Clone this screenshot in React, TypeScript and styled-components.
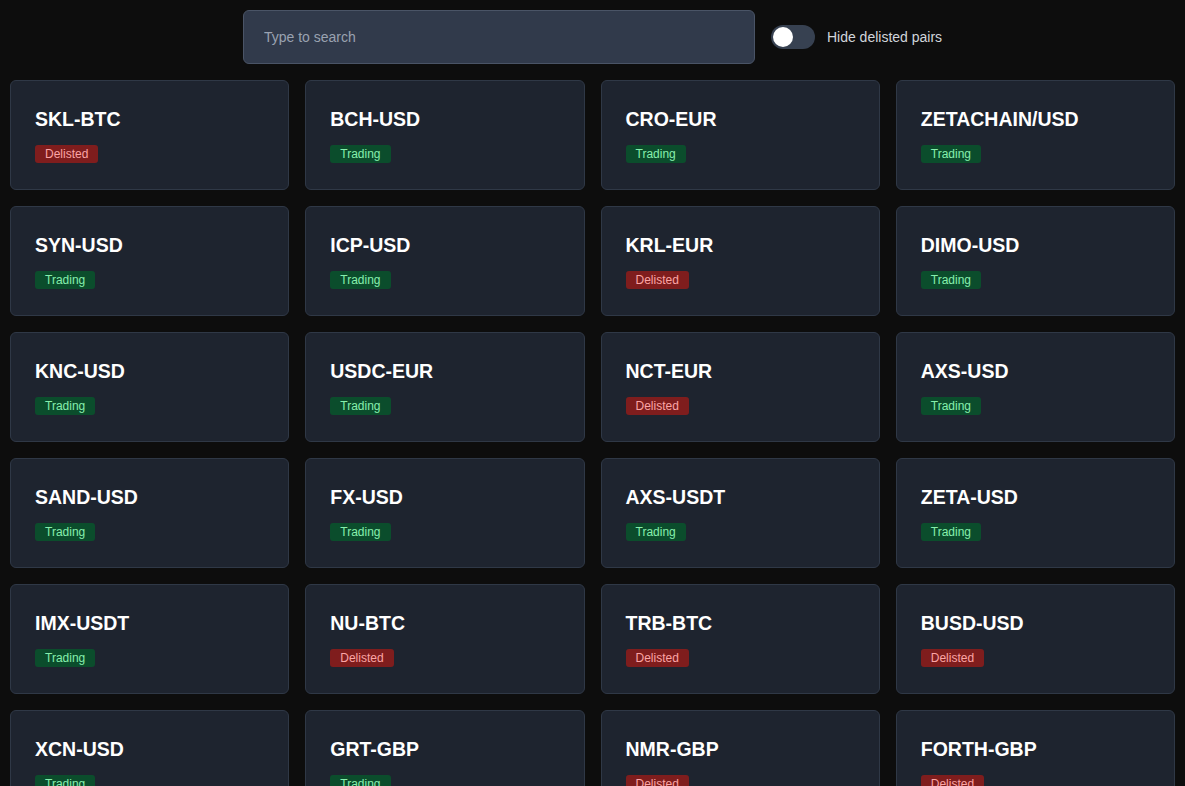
import React, { useState } from "react";
import styled, { createGlobalStyle } from "styled-components";

const Global = createGlobalStyle`
  html, body { margin: 0; padding: 0; background: #0d0d0d; }
  body { font-family: "Liberation Sans", Arial, sans-serif; color: #fff; }
  * { box-sizing: border-box; }
`;

const Page = styled.div`
  padding: 10px 10px 0;
  display: flex;
  flex-direction: column;
  gap: 16px;
`;

const Header = styled.div`
  display: flex;
  align-items: center;
  justify-content: center;
  gap: 16px;
`;

const SearchInput = styled.input`
  width: 512px;
  height: 54px;
  padding: 0 20px;
  background: #313a4b;
  border: 1px solid #4a5466;
  border-radius: 6px;
  color: #e5e7eb;
  font-family: "Liberation Sans", Arial, sans-serif;
  font-size: 14px;
  outline: none;
  &::placeholder { color: #9aa2b1; }
`;

const ToggleLabel = styled.label`
  display: flex;
  align-items: center;
  gap: 12px;
  font-size: 14px;
  color: #d1d5db;
  cursor: pointer;
`;

const Track = styled.span<{ $on: boolean }>`
  position: relative;
  width: 44px;
  height: 24px;
  border-radius: 12px;
  background: ${(p) => (p.$on ? "#22c55e" : "#374151")};
  display: inline-block;
`;

const Knob = styled.span<{ $on: boolean }>`
  position: absolute;
  top: 2px;
  left: ${(p) => (p.$on ? "22px" : "2px")};
  width: 20px;
  height: 20px;
  border-radius: 50%;
  background: #fff;
`;

const Grid = styled.div`
  display: grid;
  grid-template-columns: repeat(4, 1fr);
  gap: 16px;
`;

const Card = styled.div`
  height: 110px;
  background: #1e242f;
  border: 1px solid #2f3846;
  border-radius: 6px;
  padding: 26px 24px 0;
  display: flex;
  flex-direction: column;
  align-items: flex-start;
  gap: 14px;
`;

const Title = styled.div`
  font-size: 19.5px;
  font-weight: 700;
  line-height: 24px;
  color: #ffffff;
`;

const Badge = styled.span<{ $delisted: boolean }>`
  display: inline-flex;
  align-items: center;
  height: 18px;
  padding: 0 10px;
  border-radius: 3px;
  font-size: 12px;
  background: ${(p) => (p.$delisted ? "#7f1d1d" : "#0b4d2c")};
  color: ${(p) => (p.$delisted ? "#fca5a5" : "#86efac")};
`;

const pairs: [string, boolean][] = [
  ["SKL-BTC", true],
  ["BCH-USD", false],
  ["CRO-EUR", false],
  ["ZETACHAIN/USD", false],
  ["SYN-USD", false],
  ["ICP-USD", false],
  ["KRL-EUR", true],
  ["DIMO-USD", false],
  ["KNC-USD", false],
  ["USDC-EUR", false],
  ["NCT-EUR", true],
  ["AXS-USD", false],
  ["SAND-USD", false],
  ["FX-USD", false],
  ["AXS-USDT", false],
  ["ZETA-USD", false],
  ["IMX-USDT", false],
  ["NU-BTC", true],
  ["TRB-BTC", true],
  ["BUSD-USD", true],
  ["XCN-USD", false],
  ["GRT-GBP", false],
  ["NMR-GBP", true],
  ["FORTH-GBP", true],
];

export default function App() {
  const [hide, setHide] = useState(false);
  const [q, setQ] = useState("");
  const shown = pairs.filter(
    ([n, d]) => (!hide || !d) && n.toLowerCase().includes(q.toLowerCase())
  );
  return (
    <>
      <Global />
      <Page>
        <Header>
          <SearchInput
            placeholder="Type to search"
            value={q}
            onChange={(e) => setQ(e.target.value)}
          />
          <ToggleLabel onClick={() => setHide(!hide)}>
            <Track $on={hide}>
              <Knob $on={hide} />
            </Track>
            Hide delisted pairs
          </ToggleLabel>
        </Header>
        <Grid>
          {shown.map(([name, delisted]) => (
            <Card key={name}>
              <Title>{name}</Title>
              <Badge $delisted={delisted}>{delisted ? "Delisted" : "Trading"}</Badge>
            </Card>
          ))}
        </Grid>
      </Page>
    </>
  );
}
